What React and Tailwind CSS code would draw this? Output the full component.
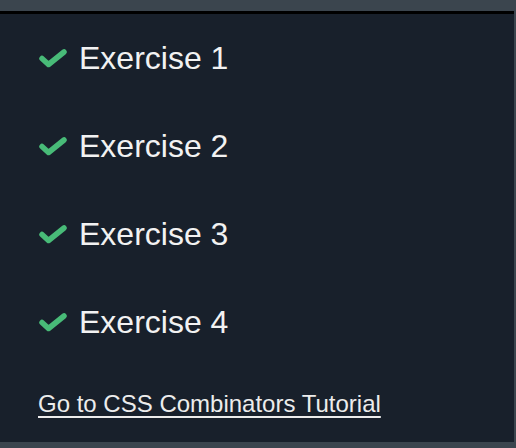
import React from 'react';

const exercises = ['Exercise 1', 'Exercise 2', 'Exercise 3', 'Exercise 4'];

const Check = () => (
  <svg width="30" height="20" viewBox="0 0 30 20" className="shrink-0">
    <polyline
      points="4,10.5 10.5,16.5 26,4"
      fill="none"
      stroke="#48bb78"
      strokeWidth="5.5"
      strokeLinecap="round"
      strokeLinejoin="round"
    />
  </svg>
);

const App = () => {
  return (
    <div className="w-[516px] h-[448px] bg-[#3b454e] pt-[11px] font-['Liberation_Sans',Arial,sans-serif]">
      <div className="h-[431px] mr-[2px] border-t-[3px] border-black bg-[#18202b] pt-[26px] pl-[38px]">
        <ul className="flex flex-col gap-[52px]">
          {exercises.map((name) => (
            <li key={name} className="flex items-center gap-[11px] text-[32px] leading-9 text-[#f2f2f2]">
              <Check />
              <span>{name}</span>
            </li>
          ))}
        </ul>
        <a href="#" className="block mt-[48px] text-2xl text-[#ececec] underline underline-offset-[4px]">
          Go to CSS Combinators Tutorial
        </a>
      </div>
    </div>
  );
};

export default App;
